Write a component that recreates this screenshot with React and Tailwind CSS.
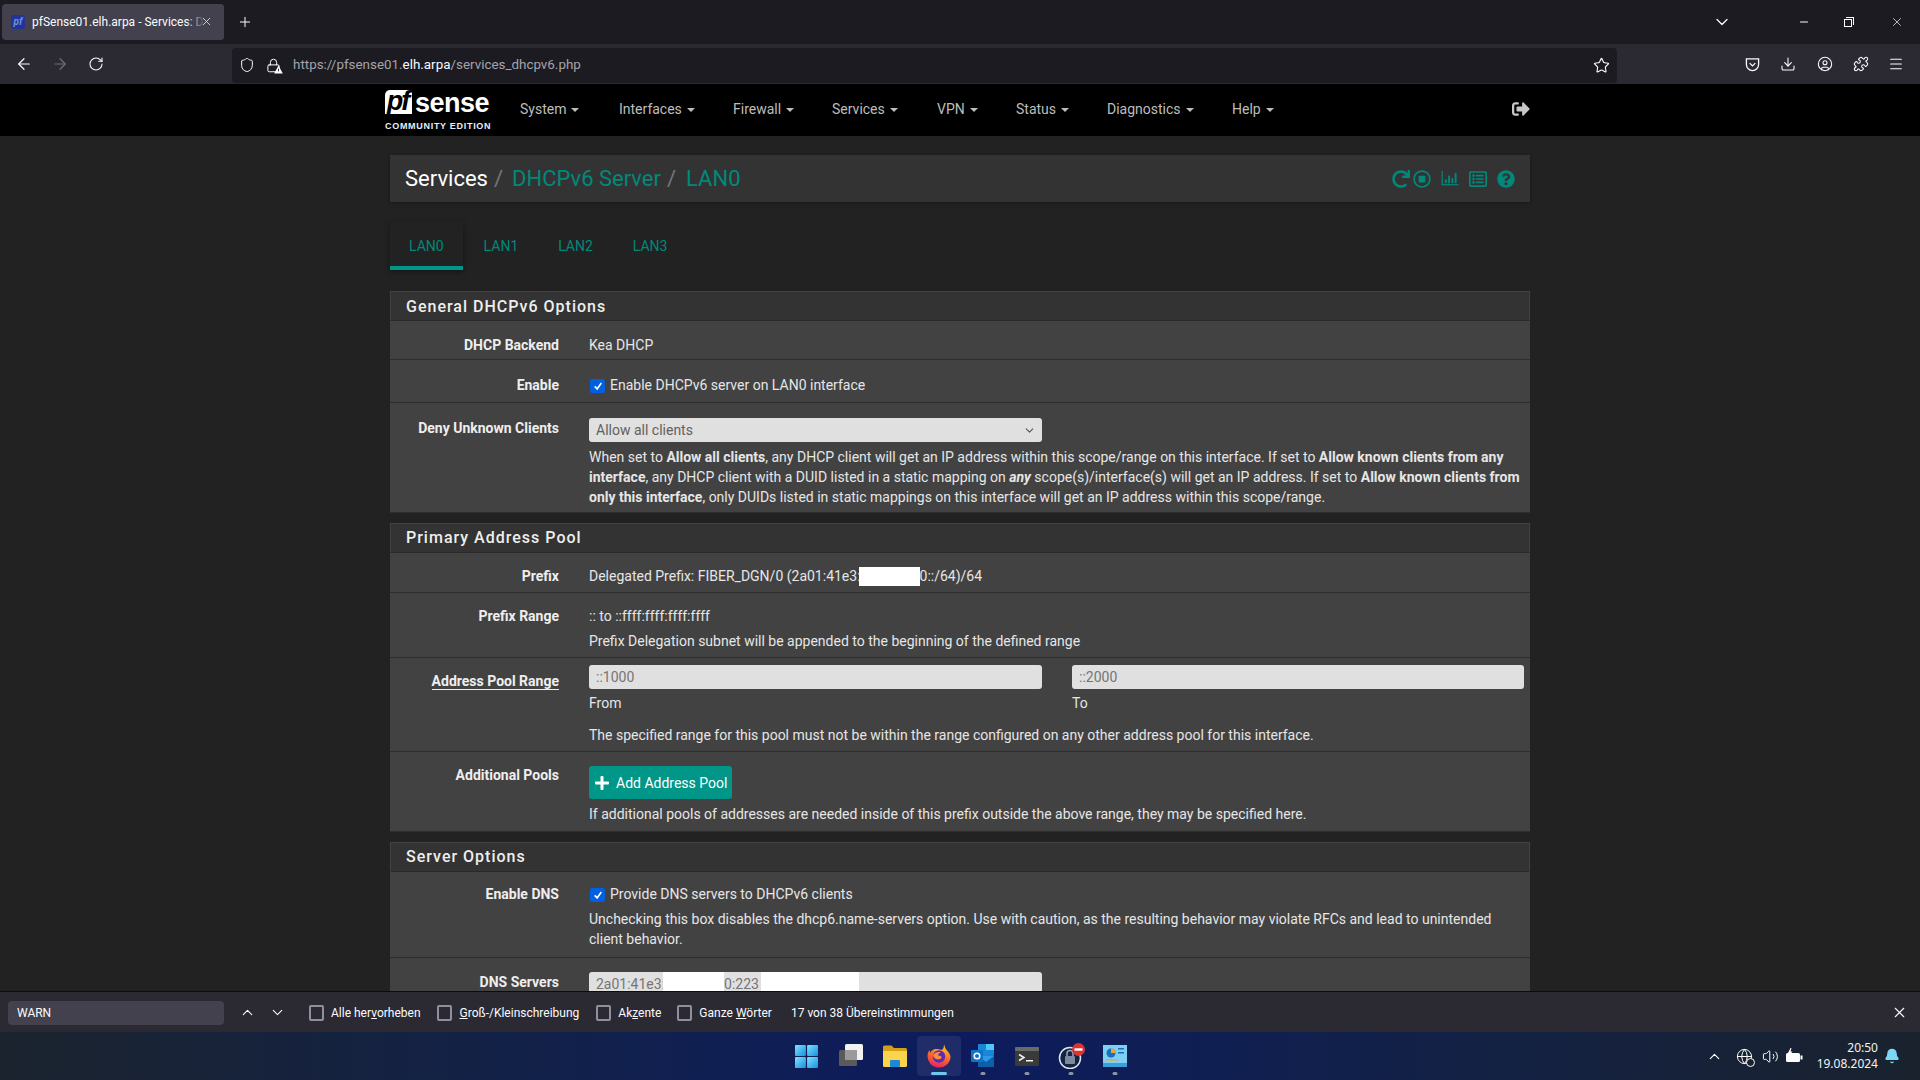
import { ArrowLeft, ArrowRight, RotateCw, Shield, Lock, Star, Download, Menu, Puzzle, ChevronUp, ChevronDown, X, Plus, Minus, Bell, Volume2, Globe, CircleUser } from "lucide-react";
import { FaSignOutAlt, FaRedo, FaRegStopCircle, FaRegListAlt, FaQuestionCircle, FaPlus } from "react-icons/fa";

const roboto = "font-['Roboto',sans-serif]";
const uiFont = "font-['Roboto','Noto_Sans',sans-serif]";

const navItems = [
  { label: "System", w: "w-[99px]" },
  { label: "Interfaces", w: "w-[114px]" },
  { label: "Firewall", w: "w-[99px]" },
  { label: "Services", w: "w-[105px]" },
  { label: "VPN", w: "w-[79px]" },
  { label: "Status", w: "w-[91px]" },
  { label: "Diagnostics", w: "w-[125px]" },
  { label: "Help", w: "w-[60px]" },
];

function BrowserChrome() {
  return (
    <div className={uiFont}>
      {/* tab strip */}
      <div className="h-[44px] bg-[#1c1b22] flex items-center pl-[2px] text-white">
        <div className="relative w-[222px] h-[36px] bg-[#42414d] rounded-[4px] flex items-center pl-[9px] overflow-hidden">
          <div className="w-[14px] h-[14px] mr-[7px] shrink-0 rounded-[2px] bg-[#23339a] text-[#6f8fd8] text-[10px] leading-[14px] italic font-bold text-center">pf</div>
          <span className="text-[12px] whitespace-nowrap text-[#fbfbfe]">pfSense01.elh.arpa - Services: DHCPv6</span>
          <div className="absolute right-0 top-0 h-full w-[38px] bg-gradient-to-r from-transparent to-[#42414d] to-50%" />
          <X size={13} strokeWidth={1.5} className="absolute right-[11px] top-[11px] text-[#e8e8ea]" />
        </div>
        <Plus size={16} strokeWidth={1.5} className="ml-[13px] text-[#fbfbfe]" />
        <div className="flex-1" />
        <ChevronDown size={20} strokeWidth={1.5} className="mr-[66px] text-[#fbfbfe]" />
        <Minus size={12} strokeWidth={2} className="mr-[34px] text-[#fbfbfe]" />
        <div className="relative w-[10px] h-[10px] mr-[36px]">
          <div className="absolute left-0 bottom-0 w-[8px] h-[8px] border border-[#fbfbfe]" />
          <div className="absolute right-0 top-0 w-[8px] h-[8px] border-t border-r border-[#fbfbfe]" />
        </div>
        <X size={14} strokeWidth={1.2} className="mr-[16px] text-[#fbfbfe]" />
      </div>
      {/* toolbar */}
      <div className="h-[40px] bg-[#2b2a33] flex items-center text-[#fbfbfe]">
        <ArrowLeft size={18} strokeWidth={1.6} className="ml-[15px]" />
        <ArrowRight size={18} strokeWidth={1.6} className="ml-[18px] text-[#6f6e75]" />
        <RotateCw size={16} strokeWidth={1.6} className="ml-[19px]" />
        <div className="ml-[128px] w-[1385px] h-[35px] mt-[2px] bg-[#1c1b22] rounded-[4px] flex items-center pl-[7px]">
          <Shield size={16} strokeWidth={1.5} />
          <div className="relative ml-[11px] mr-[12px]">
            <Lock size={15} strokeWidth={1.6} />
            <svg viewBox="0 0 10 10" className="absolute -right-[2px] -bottom-[1px] w-[9px] h-[9px]"><path d="M5 0.5 L9.8 9.5 H0.2 Z" fill="#fbfbfe" /><rect x="4.5" y="4" width="1" height="3" fill="#1c1b22" /></svg>
          </div>
          <span className="text-[13.4px] text-[#a5a4a9]">https://pfsense01.<span className="text-[#fbfbfe]">elh.arpa</span>/services_dhcpv6.php</span>
          <div className="flex-1" />
          <Star size={17} strokeWidth={1.6} className="mr-[7px]" />
        </div>
        <svg viewBox="0 0 16 16" className="ml-[128px] w-[15px] h-[15px]" fill="none" stroke="currentColor" strokeWidth="1.4"><path d="M1.5 2h13v6a6.5 6.5 0 0 1-13 0z" /><path d="M5 6.5 8 9.5 11 6.5" /></svg>
        <Download size={16} strokeWidth={1.6} className="ml-[20px]" />
        <CircleUser size={16} strokeWidth={1.6} className="ml-[21px]" />
        <Puzzle size={16} strokeWidth={1.6} className="ml-[20px]" />
        <Menu size={16} strokeWidth={1.6} className="ml-[19px]" />
      </div>
    </div>
  );
}

function Logo() {
  return (
    <div className="w-[106px] h-[44px] ml-[-5px] mt-[6px] shrink-0 font-['Liberation_Sans',sans-serif] text-white">
      <div className="flex items-end h-[24px]">
        <div className="w-[27px] h-[24px] bg-white rounded-tl-[5px] text-black italic font-bold text-[27px] leading-[22px] text-center tracking-[-2px] pr-[2px]">pf</div>
        <div className="ml-[3px] font-bold text-[27px] leading-[22px] tracking-[-0.5px]">sense</div>
      </div>
      <div className="mt-[7px] text-[9px] leading-[10px] font-bold tracking-[0.7px] whitespace-nowrap text-[#e6f0fa]">COMMUNITY EDITION</div>
    </div>
  );
}

function TopNav() {
  return (
    <div className={`h-[52px] bg-black ${roboto}`}>
      <div className="w-[1140px] mx-auto h-full flex">
        <Logo />
        <div className="ml-[29px] flex items-center pb-px">
          {navItems.map((n) => (
            <div key={n.label} className={`${n.w} flex items-center text-[14px] text-[#bdbdbd]`}>
              {n.label}
              <span className="ml-[5px] mt-[1px] w-0 h-0 border-x-[4px] border-x-transparent border-t-[4px] border-t-[#bdbdbd]" />
            </div>
          ))}
        </div>
        <div className="flex-1" />
        <div className="flex items-center pb-[3px]">
          <FaSignOutAlt size={18} className="text-[#c8c8c8]" />
        </div>
      </div>
    </div>
  );
}

function BarChartIcon() {
  return (
    <svg viewBox="0 0 18 16" className="w-[18px] h-[15px]" fill="#00897b">
      <rect x="0" y="0" width="1.3" height="15" />
      <rect x="0" y="14" width="18" height="1.3" />
      <rect x="3.5" y="9" width="2" height="4" />
      <rect x="7" y="5" width="2" height="8" />
      <rect x="10.5" y="7.5" width="2" height="5.5" />
      <rect x="14" y="2" width="2" height="11" />
    </svg>
  );
}

function Breadcrumb() {
  return (
    <div className="h-[47px] mt-[19px] bg-[#333333] shadow-[0_1px_4px_rgba(0,0,0,0.35)] flex items-center pl-[15px] pr-[15px] text-[22px]">
      <span className="text-white">Services</span>
      <span className="text-[#777] ml-[6px] mr-[9px]">/</span>
      <span className="text-[#00897b]">DHCPv6 Server</span>
      <span className="text-[#777] ml-[6px] mr-[10px]">/</span>
      <span className="text-[#00897b]">LAN0</span>
      <div className="flex-1" />
      <div className="flex items-center text-[#00897b]">
        <FaRedo size={18} />
        <FaRegStopCircle size={18} className="ml-[3px]" />
        <div className="ml-[10px]"><BarChartIcon /></div>
        <FaRegListAlt size={18} className="ml-[10px]" />
        <FaQuestionCircle size={18} className="ml-[10px]" />
      </div>
    </div>
  );
}

function Tabs() {
  return (
    <div className="mt-[20px] h-[48px] flex text-[14px] text-[#00897b]">
      {["LAN0", "LAN1", "LAN2", "LAN3"].map((t, i) => (
        <div key={t} className={i === 0
          ? "w-[73px] pl-[19px] pt-[14px] border-b-[4px] border-[#009688] shadow-[0_2px_6px_rgba(0,0,0,0.4)]"
          : "w-[74.6px] pl-[20.6px] pt-[14px]"}>{t}</div>
      ))}
    </div>
  );
}

function SectionHead({ title, className }) {
  return (
    <div className={`h-[30px] bg-[#333333] border border-[#424242] border-b-[#2a2a2a] pl-[15px] flex items-center text-[16px] font-medium tracking-[1px] text-[#eeeeee] ${className}`}>
      {title}
    </div>
  );
}

function Row({ label, pt, pb, underline, children }) {
  return (
    <div className={`flex bg-[#424242] border-b border-[#2e2e2e] ${pb}`}>
      <div className={`w-[169px] shrink-0 text-right font-bold leading-[20px] text-[#eeeeee] ${pt}`}>
        <span className={underline ? "border-b border-[#eeeeee]" : ""}>{label}</span>
      </div>
      <div className={`ml-[30px] w-[941px] leading-[20px] text-[#e6e6e6] ${pt}`}>{children}</div>
    </div>
  );
}

function Check({ children }) {
  return (
    <div className="flex items-center">
      <span className="w-[15px] h-[14px] bg-[#0060df] rounded-[2px] flex items-center justify-center mt-[2px] mr-[5px] ml-px">
        <svg viewBox="0 0 12 12" className="w-[10px] h-[10px]" fill="none" stroke="white" strokeWidth="2"><path d="M2 6.5 5 9.5 10 2.5" /></svg>
      </span>
      {children}
    </div>
  );
}

function TextBox({ className, children }) {
  return <div className={`h-[24px] bg-[#e0e0e0] rounded-[3px] pl-[7px] leading-[24px] text-[#757575] ${className}`}>{children}</div>;
}

function Redacted({ className }) {
  return <span className={`inline-block bg-white align-top ${className}`} />;
}

function Page() {
  return (
    <div className={`flex-1 overflow-hidden bg-[#222222] text-[14px] ${roboto}`}>
      <div className="w-[1140px] mx-auto">
        <Breadcrumb />
        <Tabs />

        <SectionHead title="General DHCPv6 Options" className="mt-[21px] pt-[2px]" />
        <Row label="DHCP Backend" pt="pt-[14px]" pb="pb-[4px]">Kea DHCP</Row>
        <Row label="Enable" pt="pt-[15px]" pb="pb-[7px]">
          <Check>Enable DHCPv6 server on LAN0 interface</Check>
        </Row>
        <Row label="Deny Unknown Clients" pt="pt-[15px]" pb="pb-[5px]">
          <div className="w-[453px] h-[24px] bg-[#e0e0e0] rounded-[3px] pl-[7px] pr-[6px] flex items-center justify-between text-[#616161] mb-[5px]">
            Allow all clients
            <ChevronDown size={13} strokeWidth={2} className="text-[#555]" />
          </div>
          <div>
            When set to <b>Allow all clients</b>, any DHCP client will get an IP address within this scope/range on this interface. If set to <b>Allow known clients from any interface</b>, any DHCP client with a DUID listed in a static mapping on <b><i>any</i></b> scope(s)/interface(s) will get an IP address. If set to <b>Allow known clients from only this interface</b>, only DUIDs listed in static mappings on this interface will get an IP address within this scope/range.
          </div>
        </Row>

        <SectionHead title="Primary Address Pool" className="mt-[10px]" />
        <Row label="Prefix" pt="pt-[13px]" pb="pb-[6px]">
          Delegated Prefix: FIBER_DGN/0 (2a01:41e3:<Redacted className="w-[61px] h-[19px] ml-[-2px] mt-[1px]" />0::/64)/64
        </Row>
        <Row label="Prefix Range" pt="pt-[13px]" pb="pb-[6px]">
          <div>:: to ::ffff:ffff:ffff:ffff</div>
          <div className="mt-[5px]">Prefix Delegation subnet will be appended to the beginning of the defined range</div>
        </Row>
        <div className="flex bg-[#424242] border-b border-[#2e2e2e] pb-[6px]">
          <div className="w-[169px] shrink-0 text-right font-bold leading-[20px] text-[#eeeeee] pt-[13px]">
            <span className="border-b border-[#eeeeee]">Address Pool Range</span>
          </div>
          <div className="ml-[30px] w-[936px] leading-[20px] text-[#e6e6e6] pt-[7px]">
            <div className="flex">
              <div className="w-[453px]">
                <TextBox>::1000</TextBox>
                <div className="mt-[4px]">From</div>
              </div>
              <div className="w-[452px] ml-[30px]">
                <TextBox>::2000</TextBox>
                <div className="mt-[4px]">To</div>
              </div>
            </div>
            <div className="mt-[12px]">The specified range for this pool must not be within the range configured on any other address pool for this interface.</div>
          </div>
        </div>
        <div className="flex bg-[#424242] border-b border-[#2e2e2e] pb-[7px]">
          <div className="w-[169px] shrink-0 text-right font-bold leading-[20px] text-[#eeeeee] pt-[13px]">Additional Pools</div>
          <div className="ml-[30px] w-[936px] leading-[20px] text-[#e6e6e6] pt-[14px]">
            <div className="w-[143px] h-[33px] bg-[#009688] rounded-[3px] flex items-center pl-[5px] text-white">
              <FaPlus size={16} className="mr-[6px]" />
              Add Address Pool
            </div>
            <div className="mt-[5px]">If additional pools of addresses are needed inside of this prefix outside the above range, they may be specified here.</div>
          </div>
        </div>

        <SectionHead title="Server Options" className="mt-[10px]" />
        <Row label="Enable DNS" pt="pt-[12px]" pb="pb-[8px]">
          <Check>Provide DNS servers to DHCPv6 clients</Check>
          <div className="mt-[5px] w-[920px]">Unchecking this box disables the dhcp6.name-servers option. Use with caution, as the resulting behavior may violate RFCs and lead to unintended client behavior.</div>
        </Row>
        <Row label="DNS Servers" pt="pt-[14px]" pb="pb-[10px]">
          <TextBox className="w-[453px] text-[#9e9e9e] whitespace-nowrap">
            2a01:41e3:<Redacted className="w-[61px] h-[24px] ml-[-2px]" />0:223<Redacted className="w-[98px] h-[24px] ml-[2px]" />
          </TextBox>
        </Row>
      </div>
    </div>
  );
}

function FindOption({ label, className }) {
  return (
    <div className={`flex items-center ${className}`}>
      <span className="w-[15px] h-[16px] border-2 border-[#8f8f9d] rounded-[2px] mr-[7px] shrink-0" />
      {label}
    </div>
  );
}

function FindBar() {
  return (
    <div className={`h-[41px] bg-[#2b2a33] border-t border-[#0c0c0d] flex items-center pt-px text-[12px] text-[#fbfbfe] ${uiFont}`}>
      <div className="ml-[8px] w-[216px] h-[24px] bg-[#42414d] rounded-[4px] pl-[9px] leading-[24px] text-[12px]">WARN</div>
      <ChevronUp size={17} strokeWidth={1.5} className="ml-[15px]" />
      <ChevronDown size={17} strokeWidth={1.5} className="ml-[13px]" />
      <FindOption className="ml-[23px]" label={<span>Alle her<u>v</u>orheben</span>} />
      <FindOption className="ml-[16px]" label={<span className="ml-px"><u>G</u>roß-/Kleinschreibung</span>} />
      <FindOption className="ml-[17px]" label={<span>Ak<u>z</u>ente</span>} />
      <FindOption className="ml-[16px]" label={<span>Ganze <u>W</u>örter</span>} />
      <span className="ml-[19px]">17 von 38 Übereinstimmungen</span>
      <div className="flex-1" />
      <X size={17} strokeWidth={1.5} className="mr-[12px]" />
    </div>
  );
}

function TaskIcon({ active, dot, children }) {
  return (
    <div className={`relative w-[44px] h-[40px] flex items-center justify-center rounded-[4px] ${active ? "bg-[#ffffff14]" : ""}`}>
      {children}
      {dot && <span className="absolute bottom-[1px] left-1/2 -translate-x-1/2 w-[5px] h-[3px] rounded-full bg-[#8d93a3]" />}
      {active && <span className="absolute bottom-[1px] left-1/2 -translate-x-1/2 w-[16px] h-[3px] rounded-full bg-[#6cc7f5]" />}
    </div>
  );
}

function Taskbar() {
  return (
    <div className="h-[48px] grid grid-cols-[1fr_auto_1fr] items-center bg-gradient-to-r from-[#1b232e] via-[#0d1b5e] to-[#1a222e] text-white font-['Noto_Sans',sans-serif]">
      <div />
      <div className="flex items-center ml-[1px]">
        <TaskIcon>
          <svg viewBox="0 0 24 24" className="w-[23px] h-[23px]">
            <defs><linearGradient id="win" x1="0" y1="0" x2="1" y2="1"><stop offset="0" stopColor="#7fe3fb" /><stop offset="1" stopColor="#1591e0" /></linearGradient></defs>
            <rect x="0" y="0" width="11.4" height="11.4" rx="1" fill="url(#win)" />
            <rect x="12.6" y="0" width="11.4" height="11.4" rx="1" fill="url(#win)" />
            <rect x="0" y="12.6" width="11.4" height="11.4" rx="1" fill="url(#win)" />
            <rect x="12.6" y="12.6" width="11.4" height="11.4" rx="1" fill="url(#win)" />
          </svg>
        </TaskIcon>
        <TaskIcon>
          <svg viewBox="0 0 24 24" className="w-[24px] h-[24px]">
            <rect x="6" y="0" width="18" height="16" rx="1.5" fill="#f2f2f2" />
            <rect x="0" y="6" width="18" height="16" rx="1.5" fill="#5a5a5a" />
            <rect x="6" y="6" width="12" height="10" fill="#9a9a9a" />
          </svg>
        </TaskIcon>
        <TaskIcon>
          <svg viewBox="0 0 24 22" className="w-[24px] h-[22px]">
            <path d="M0 2a1.5 1.5 0 0 1 1.5-1.5h7L11 3h11.5A1.5 1.5 0 0 1 24 4.5V6H0z" fill="#d39f15" />
            <path d="M0 6h24v14.5a1.5 1.5 0 0 1-1.5 1.5h-21A1.5 1.5 0 0 1 0 20.5z" fill="#fcd34d" />
            <rect x="7" y="15" width="10" height="7" rx="1" fill="#1e88d8" />
          </svg>
        </TaskIcon>
        <TaskIcon active>
          <svg viewBox="0 0 24 24" className="w-[24px] h-[24px]">
            <defs><linearGradient id="fx" x1="0.6" y1="0" x2="0.3" y2="1"><stop offset="0" stopColor="#ffc928" /><stop offset="0.5" stopColor="#ff6a2b" /><stop offset="1" stopColor="#e0245e" /></linearGradient></defs>
            <path d="M17 0.5c1 2 .8 3.5 2.5 5.5 2.5 2.5 4 5 4 7a11.5 11 0 1 1-23-1c0-2 .6-4 2-6l.5 3c1-2 3-3.5 5-4 1 0 3-.5 5 .5 2 .5 4 .5 4-5.5z" fill="url(#fx)" />
            <circle cx="12" cy="12.5" r="6.2" fill="#5b2bb8" />
            <path d="M6 11c2-2.5 5-3.5 8-2.5-2 .5-3 1.5-3 3 3 0 4 1 3.5 2.5-1.5 2-5.5 2-7.5-.5-.7-.9-1-1.7-1-2.5z" fill="#ff8a3c" />
          </svg>
        </TaskIcon>
        <TaskIcon dot>
          <svg viewBox="0 0 24 24" className="w-[24px] h-[24px]">
            <rect x="7" y="0" width="16" height="12" rx="1" fill="#1a86d6" />
            <rect x="15" y="0" width="8" height="6" fill="#50c8f5" />
            <path d="M7 12 23 12 23 23 7 23z" fill="#0f5fa8" />
            <path d="M7 12 15 18 23 12z" fill="#2a9be8" />
            <rect x="0" y="6" width="12" height="12" rx="1" fill="#0e74c9" />
            <circle cx="6" cy="12" r="2.8" fill="none" stroke="white" strokeWidth="1.5" />
          </svg>
        </TaskIcon>
        <TaskIcon dot>
          <svg viewBox="0 0 24 19" className="w-[24px] h-[19px]">
            <rect x="0" y="0" width="24" height="19" rx="1.5" fill="#3a3a3a" />
            <rect x="0" y="0" width="24" height="4" rx="1" fill="#6a6a6a" />
            <path d="M4 7.5 9 10.5 4 13.5" fill="none" stroke="#f2f2f2" strokeWidth="1.5" />
            <rect x="11" y="13" width="7" height="1.5" fill="#f2f2f2" />
          </svg>
        </TaskIcon>
        <TaskIcon dot>
          <svg viewBox="0 0 28 26" className="w-[28px] h-[26px] ml-[2px]">
            <circle cx="12" cy="15" r="10.5" fill="#16233f" stroke="#dfe6f2" strokeWidth="1.5" />
            <rect x="7" y="13" width="10" height="8" rx="1" fill="#7c8aa0" />
            <path d="M9 13v-2.5a3 3 0 0 1 6 0V13" fill="none" stroke="#9aa7bb" strokeWidth="1.5" />
            <circle cx="20.5" cy="6.5" r="6.5" fill="#e03131" />
            <rect x="16.5" y="5.3" width="8" height="2.4" fill="white" />
          </svg>
        </TaskIcon>
        <TaskIcon dot>
          <svg viewBox="0 0 24 22" className="w-[24px] h-[22px]">
            <rect x="0" y="0" width="24" height="18" fill="#7ecff4" />
            <rect x="0" y="18" width="24" height="4" fill="#3a9fd8" />
            <circle cx="8" cy="8" r="4.5" fill="#1d6fb8" />
            <path d="M8 8V3.5A4.5 4.5 0 0 1 12.5 8z" fill="#f5a623" />
            <rect x="15" y="3" width="6" height="1.5" fill="#1d6fb8" />
            <rect x="15" y="7" width="6" height="1.5" fill="#1d6fb8" />
            <rect x="3" y="14" width="12" height="1.5" fill="#f5a623" />
          </svg>
        </TaskIcon>
      </div>
      <div className="flex items-center justify-end pr-[20px]">
        <ChevronUp size={17} strokeWidth={1.6} className="mr-[13px]" />
        <div className="relative mr-[6px]">
          <Globe size={17} strokeWidth={1.4} />
          <span className="absolute -right-[2px] -bottom-[2px] w-[9px] h-[9px] rounded-full bg-[#1b232e] border border-white" />
        </div>
        <Volume2 size={17} strokeWidth={1.4} className="ml-[3px] mr-[6px]" />
        <svg viewBox="0 0 18 16" className="w-[18px] h-[16px] mr-[14px]">
          <rect x="1" y="5" width="14" height="9" rx="1.5" fill="white" />
          <rect x="15.5" y="7.5" width="2" height="4" fill="white" />
          <path d="M5.500 0 3 5h2l-1 3 3.500-4.500h-2L6.500 0z" fill="white" />
        </svg>
        <div className="text-[12px] leading-[16px] text-right text-[#f2f2f2]">
          <div>20:50</div>
          <div>19.08.2024</div>
        </div>
        <Bell size={16} fill="#7fd7f7" stroke="#7fd7f7" className="ml-[6px]" />
      </div>
    </div>
  );
}

export default function App() {
  return (
    <div className="w-[1920px] h-[1080px] flex flex-col overflow-hidden bg-[#222222]">
      <BrowserChrome />
      <TopNav />
      <Page />
      <FindBar />
      <Taskbar />
    </div>
  );
}
